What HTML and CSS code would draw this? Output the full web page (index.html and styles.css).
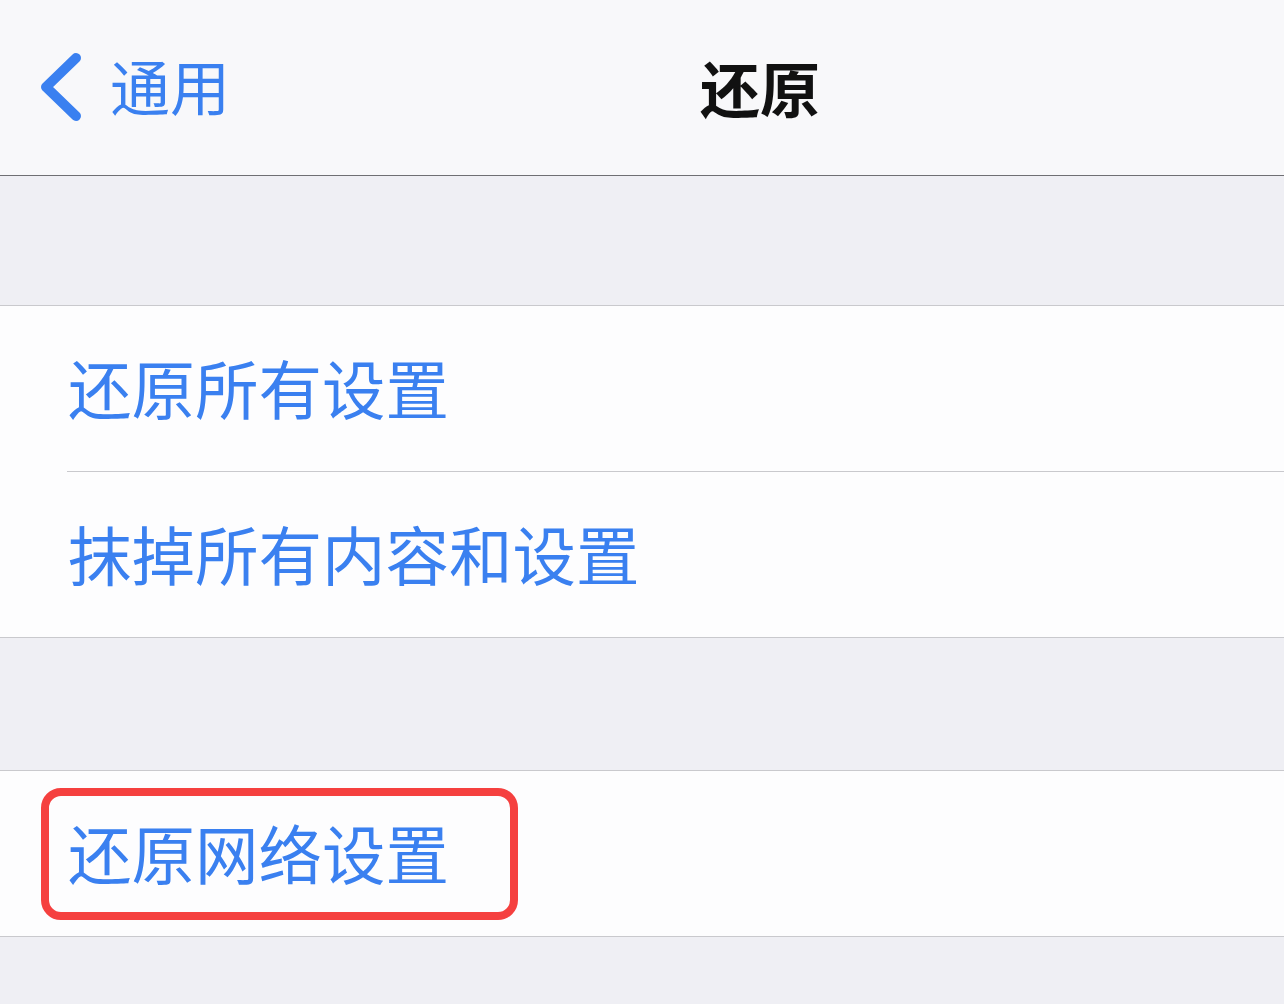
FILE: index.html
```html
<!DOCTYPE html>
<html lang="zh-CN">
<head>
<meta charset="utf-8">
<link rel="stylesheet" href="styles.css">
</head>
<body>
<div class="screen">
  <header class="nav">
    <div class="back">
      <svg class="chev" width="44" height="70" viewBox="0 0 44 70"><path d="M38 6 L8 35 L38 64" fill="none" stroke="#3a80f0" stroke-width="10" stroke-linecap="round" stroke-linejoin="round"/></svg>
      <span class="back-label">通用</span>
    </div>
    <div class="title">还原</div>
  </header>
  <div class="gap g1"></div>
  <section class="group">
    <div class="row">还原所有设置</div>
    <div class="sep"></div>
    <div class="row">抹掉所有内容和设置</div>
  </section>
  <div class="gap g2"></div>
  <section class="group">
    <div class="row">还原网络设置<span class="mark"></span></div>
  </section>
  <div class="gap g3"></div>
</div>
</body>
</html>
```
FILE: styles.css
```css
html, body { margin: 0; padding: 0; }
body {
  background: #efeff4;
  font-family: "PingFang SC", "Noto Sans CJK SC", "Noto Sans", sans-serif;
  width: 1284px;
  height: 1004px;
  overflow: hidden;
}
.screen { display: flex; flex-direction: column; }
.nav {
  height: 175px;
  background: #f8f8fa;
  border-bottom: 1px solid #6f6f73;
  display: grid;
  grid-template-columns: 1fr auto 1fr;
  align-items: center;
  position: relative;
}
.back {
  display: flex;
  align-items: center;
  gap: 28px;
  padding-left: 38px;
  padding-bottom: 2px;
}
.chev { display: block; }
.back-label {
  color: #3a80f0;
  font-size: 60px;
  line-height: 1;
  padding-bottom: 4px;
}
.title {
  grid-column: 2;
  font-size: 60px;
  font-weight: 700;
  color: #111;
  line-height: 1;
  padding-bottom: 2px;
  margin-left: 236px;
}
.gap { background: #efeff4; }
.g1 { height: 129px; }
.g2 { height: 132px; }
.g3 { flex: 1; height: 70px; }
.group {
  background: #fdfdfe;
  border-top: 1px solid #c9c9cd;
  border-bottom: 1px solid #c9c9cd;
  display: flex;
  flex-direction: column;
}
.row {
  height: 165px;
  display: flex;
  align-items: center;
  padding-left: 68px;
  padding-bottom: 3px;
  box-sizing: border-box;
  color: #3a80f0;
  font-size: 63.5px;
  line-height: 1;
  position: relative;
}
.sep {
  height: 1px;
  background: #c9c9cd;
  margin-left: 67px;
}
.mark {
  position: absolute;
  left: 41px;
  top: 17px;
  width: 477px;
  height: 132px;
  box-sizing: border-box;
  border: 8px solid #f5403f;
  border-radius: 20px;
}
```
